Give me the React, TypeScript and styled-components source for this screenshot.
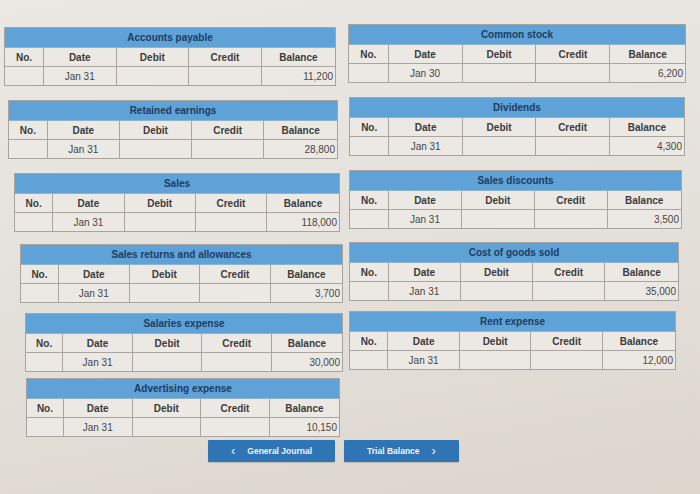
import React from 'react';
import styled, { createGlobalStyle } from 'styled-components';

type Account = {
  title: string;
  date: string;
  balance: string;
  top: number;
  left: number;
  width: number;
};

const leftAccounts: Account[] = [
  { title: 'Accounts payable', date: 'Jan 31', balance: '11,200', top: 27, left: 4, width: 330 },
  { title: 'Retained earnings', date: 'Jan 31', balance: '28,800', top: 14, left: 8, width: 328 },
  { title: 'Sales', date: 'Jan 31', balance: '118,000', top: 14, left: 14, width: 324 },
  { title: 'Sales returns and allowances', date: 'Jan 31', balance: '3,700', top: 12, left: 20, width: 321 },
  { title: 'Salaries expense', date: 'Jan 31', balance: '30,000', top: 10, left: 25, width: 316 },
  { title: 'Advertising expense', date: 'Jan 31', balance: '10,150', top: 6, left: 26, width: 312 },
];

const rightAccounts: Account[] = [
  { title: 'Common stock', date: 'Jan 30', balance: '6,200', top: 24, left: 0, width: 336 },
  { title: 'Dividends', date: 'Jan 31', balance: '4,300', top: 14, left: 1, width: 334 },
  { title: 'Sales discounts', date: 'Jan 31', balance: '3,500', top: 14, left: 1, width: 331 },
  { title: 'Cost of goods sold', date: 'Jan 31', balance: '35,000', top: 13, left: 1, width: 328 },
  { title: 'Rent expense', date: 'Jan 31', balance: '12,000', top: 10, left: 1, width: 325 },
];

const headings = ['No.', 'Date', 'Debit', 'Credit', 'Balance'];

const LedgerTable: React.FC<{ account: Account }> = ({ account }) => (
  <Ledger $top={account.top} $left={account.left} $width={account.width}>
    <TitleBar>{account.title}</TitleBar>
    <Row>
      {headings.map((h) => (
        <HeadCell key={h}>{h}</HeadCell>
      ))}
    </Row>
    <Row>
      <DataCell />
      <DataCell>{account.date}</DataCell>
      <DataCell />
      <DataCell />
      <DataCell $right>{account.balance}</DataCell>
    </Row>
  </Ledger>
);

const App: React.FC = () => (
  <>
    <GlobalStyle />
    <Page>
      <Columns>
        <LeftColumn>
          {leftAccounts.map((a) => (
            <LedgerTable key={a.title} account={a} />
          ))}
        </LeftColumn>
        <RightColumn>
          {rightAccounts.map((a) => (
            <LedgerTable key={a.title} account={a} />
          ))}
        </RightColumn>
      </Columns>
      <ButtonBar>
        <NavButton $width={127}>
          <Chevron>&lsaquo;</Chevron>
          General Journal
        </NavButton>
        <NavButton $width={115}>
          Trial Balance
          <Chevron>&rsaquo;</Chevron>
        </NavButton>
      </ButtonBar>
    </Page>
  </>
);

const GlobalStyle = createGlobalStyle`
  html, body {
    margin: 0;
    height: 100%;
  }
  body {
    font-family: 'Liberation Sans', Arial, sans-serif;
    background: linear-gradient(170deg, #ebe8e4 0%, #e4e0da 55%, #dcd6cd 100%);
    overflow: hidden;
  }
`;

const Page = styled.div`
  width: 700px;
  height: 494px;
  display: flex;
  flex-direction: column;
`;

const Columns = styled.div`
  display: flex;
`;

const LeftColumn = styled.div`
  width: 348px;
  display: flex;
  flex-direction: column;
`;

const RightColumn = styled.div`
  flex: 1;
  display: flex;
  flex-direction: column;
`;

const Ledger = styled.div<{ $top: number; $left: number; $width: number }>`
  margin-top: ${(p) => p.$top}px;
  margin-left: ${(p) => p.$left}px;
  width: ${(p) => p.$width}px;
  border: 1px solid #a7a39d;
  background: #ece9e4;
`;

const TitleBar = styled.div`
  height: 19px;
  background: #5fa2d7;
  color: #1e3c62;
  font-weight: bold;
  font-size: 10px;
  display: flex;
  align-items: center;
  justify-content: center;
  border-bottom: 1px solid #8fb3cf;
`;

const Row = styled.div`
  display: grid;
  grid-template-columns: 11.5fr 22fr 22fr 22fr 22.5fr;
  height: 18px;
  & + & {
    border-top: 1px solid #aaa69f;
  }
`;

const HeadCell = styled.div`
  display: flex;
  align-items: center;
  justify-content: center;
  font-size: 10px;
  font-weight: bold;
  color: #3b3b3b;
  & + & {
    border-left: 1px solid #aaa69f;
  }
`;

const DataCell = styled.div<{ $right?: boolean }>`
  display: flex;
  align-items: center;
  justify-content: ${(p) => (p.$right ? 'flex-end' : 'center')};
  padding: ${(p) => (p.$right ? '0 2px 0 0' : '0')};
  font-size: 10px;
  color: #454545;
  & + & {
    border-left: 1px solid #aaa69f;
  }
`;

const ButtonBar = styled.div`
  display: flex;
  gap: 9px;
  padding-left: 208px;
  margin-top: 3px;
`;

const NavButton = styled.button<{ $width: number }>`
  width: ${(p) => p.$width}px;
  height: 22px;
  border: 0;
  border-radius: 1px;
  background: #2f74b5;
  color: #f2f5f8;
  font-family: inherit;
  font-weight: bold;
  font-size: 8.5px;
  display: flex;
  align-items: center;
  justify-content: center;
  gap: 12px;
  padding: 0;
  box-shadow: 0 1px 1px rgba(0, 0, 0, 0.15);
`;

const Chevron = styled.span`
  font-size: 13px;
  font-weight: normal;
  line-height: 1;
  margin-top: -2px;
`;

export default App;
